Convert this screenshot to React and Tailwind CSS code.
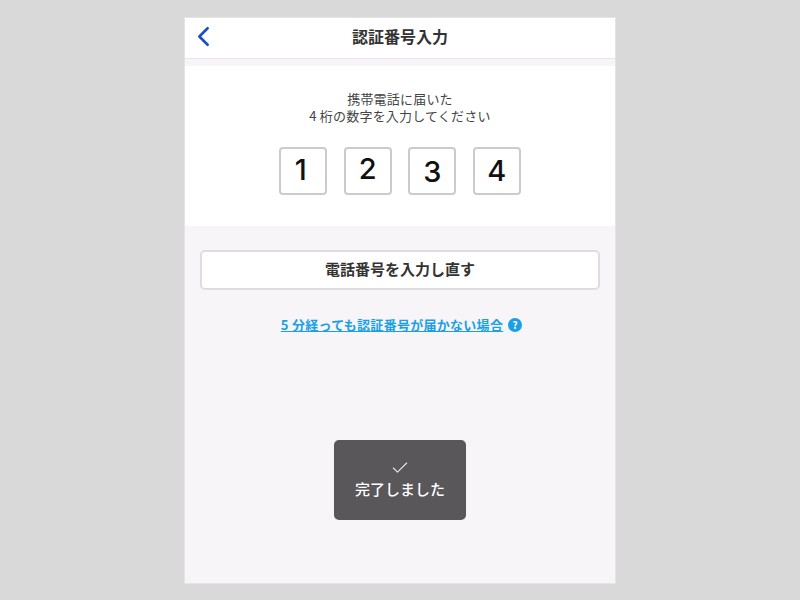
import React from "react";
import { ChevronLeft, Check } from "lucide-react";

const jp = "font-['Noto_Sans_CJK_JP','Noto_Sans','Liberation_Sans',sans-serif]";

const digits = [
  { value: "1", shift: "pb-[1px] pr-[5px]" },
  { value: "2", shift: "pb-[3px]" },
  { value: "3", shift: "pt-[2px]" },
  { value: "4", shift: "pb-0" },
];

const App = () => {
  return (
    <div className={`flex h-[600px] w-[800px] items-center justify-center bg-[#d9d9d9] ${jp}`}>
      <section className="relative flex h-[567px] w-[432px] flex-col border border-[#e4e4e4] bg-[#f7f5f8]">
        <header className="relative flex h-[41px] items-center justify-center border-b border-[#e6e5e8] bg-white">
          <button className="absolute left-[2px] top-[2px] text-[#1a4fc4]">
            <ChevronLeft size={33} strokeWidth={1.9} />
          </button>
          <h1 className="pb-[4px] text-[16px] font-bold text-[#333333]">認証番号入力</h1>
        </header>
        <div className="h-[7px] bg-[#f7f5f8]" />

        <div className="flex h-[160px] flex-col items-center bg-white pt-[24px]">
          <p className="text-center text-[13px] leading-[17px] tracking-[0.2px] text-[#444444]">
            携帯電話に届いた
            <br />4 桁の数字を入力してください
          </p>
          <div className="mt-[23px] flex gap-[16.5px]">
            {digits.map((d) => (
              <div
                key={d.value}
                className={`flex h-[48px] w-[48px] items-center justify-center rounded-[4px] border-2 border-[#cbcbcb] bg-white font-['Inter',sans-serif] text-[29px] font-medium text-[#111111] ${d.shift}`}
              >
                {d.value}
              </div>
            ))}
          </div>
        </div>

        <div className="flex flex-col items-center px-[15px] pt-[24px]">
          <button className="flex h-[40px] w-full items-center justify-center rounded-[5px] border-2 border-[#dedce0] bg-white text-[15px] font-bold text-[#333333]">
            電話番号を入力し直す
          </button>
          <div className="mt-[25px] flex items-center gap-[5px] pl-[3px]">
            <a className="text-[13px] font-bold leading-[20px] tracking-[0.28px] text-[#1ba0e6] underline">
              5 分経っても認証番号が届かない場合
            </a>
            <span className="flex h-[14px] w-[14px] items-center justify-center rounded-full bg-[#1ba0e6] text-[10px] font-bold leading-none text-white">
              ?
            </span>
          </div>
        </div>

        <div className="absolute left-[149px] top-[422px] flex h-[80px] w-[132px] flex-col items-center rounded-[5px] bg-[#59575a] pt-[18px] text-white">
          <Check size={20} strokeWidth={1.3} className="text-[#e8e8e8]" />
          <span className="mt-[1px] text-[15px] font-medium leading-[20px]">完了しました</span>
        </div>
      </section>
    </div>
  );
};

export default App;
